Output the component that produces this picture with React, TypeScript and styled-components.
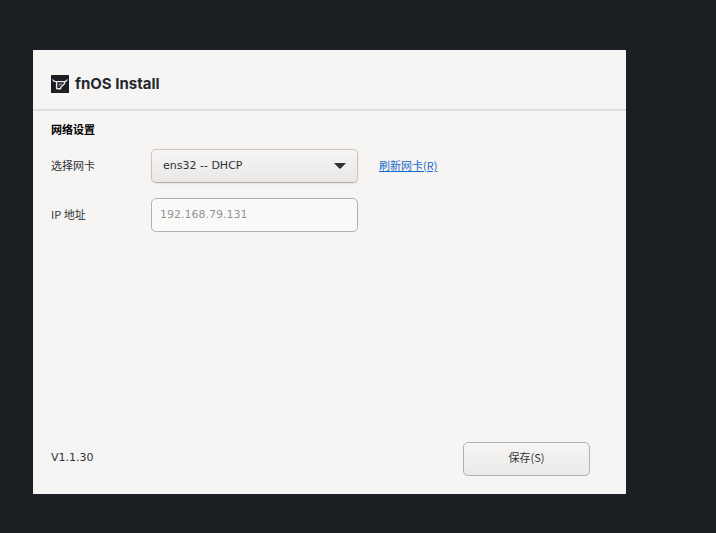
import React, { useState } from "react";
import styled, { createGlobalStyle } from "styled-components";

const GlobalStyle = createGlobalStyle`
  *, *::before, *::after { box-sizing: border-box; }
  html, body, #root { height: 100%; }
  body {
    margin: 0;
    background: #1b1e22;
    color: #2e3436;
    font: 11px/16px "DejaVu Sans", "Noto Sans CJK SC", sans-serif;
  }
  button, input, select { font: inherit; color: inherit; }
`;

const cjk = `"Noto Sans CJK SC", "DejaVu Sans", sans-serif`;

const Desktop = styled.div`
  display: flex;
  min-height: 100%;
  padding: 50px 90px 39px 33px;
`;

const Window = styled.main`
  flex: 1;
  display: flex;
  flex-direction: column;
  background: #f6f5f4;
`;

const Header = styled.header`
  display: flex;
  align-items: center;
  gap: 6px;
  padding: 24px 18px 15px;
  border-bottom: 2px solid #dfdedd;
`;

const Title = styled.h1`
  margin: 0;
  font: 700 15px/20px Inter, sans-serif;
  color: #25292d;
`;

const Form = styled.form`
  flex: 1;
  display: flex;
  flex-direction: column;
  padding: 10px 18px 18px;
`;

const SectionTitle = styled.h2`
  margin: 0 0 12px;
  font: 700 11px/16px ${cjk};
  color: #000;
`;

const Fields = styled.div`
  display: grid;
  grid-template-columns: 100px 207px auto;
  justify-content: start;
  align-items: center;
  row-gap: 15px;
`;

const Label = styled.label`
  padding-bottom: 2px;
  font-family: ${cjk};
`;

const SelectBox = styled.div`
  display: grid;
  align-items: center;

  & > * { grid-area: 1 / 1; }
  & > svg {
    justify-self: end;
    margin-right: 12px;
    pointer-events: none;
  }
`;

const Select = styled.select`
  appearance: none;
  width: 100%;
  height: 34px;
  padding: 0 32px 0 11px;
  border: 1px solid #cdc7c2;
  border-bottom-color: #b5b0ac;
  border-radius: 5px;
  background: linear-gradient(#f6f5f4, #e9e8e7);
  box-shadow: 0 1px 2px rgba(0, 0, 0, 0.08);
`;

const AddressInput = styled.input`
  width: 100%;
  height: 34px;
  padding: 0 8px 2px;
  border: 1px solid #b3b2b1;
  border-radius: 5px;
  background: #faf9f8;
  color: #929595;
`;

const RefreshLink = styled.a`
  margin-left: 21px;
  padding-bottom: 2px;
  font-family: ${cjk};
  color: #1b6acb;
  text-decoration: underline;
`;

const Footer = styled.footer`
  display: flex;
  align-items: center;
  justify-content: space-between;
  margin-top: auto;
  padding-right: 18px;
`;

const Version = styled.span`
  padding-bottom: 2px;
`;

const SaveButton = styled.button`
  width: 127px;
  height: 34px;
  padding: 0 0 4px;
  border: 1px solid #b3b2b1;
  border-radius: 5px;
  background: linear-gradient(#f6f5f4, #ebeae9);
  font-family: ${cjk};
`;

const Logo = () => (
  <svg width="18" height="18" viewBox="0 0 18 18" aria-hidden="true">
    <rect width="18" height="18" fill="#1b1e22" />
    <path
      d="M1.4 3.6C1.2 6 2.2 7.1 4.6 7.2L5.2 6C3.2 6 2.2 5.3 1.4 3.6ZM16.6 3.6C16.8 6 15.8 7.1 13.6 7.2L12.8 6C14.8 6 15.8 5.3 16.6 3.6Z"
      fill="#f2f2f2"
    />
    <path
      d="M5.6 6.6H13.6V8.4L9.6 12.4V13.8H6.4Q5.6 13.8 5.6 13Z"
      fill="none"
      stroke="#e8e8e8"
      strokeWidth="1.4"
      strokeLinejoin="round"
    />
    <path d="M8.2 11.2V9.2H11.2" fill="none" stroke="#a9abad" strokeWidth="1" />
  </svg>
);

const Arrow = () => (
  <svg width="12" height="6" viewBox="0 0 12 6" aria-hidden="true">
    <path d="M0 0H12L7 5.3Q6 6 5 5.3Z" fill="#2e3436" />
  </svg>
);

export default function App() {
  const [card, setCard] = useState("ens32");
  return (
    <>
      <GlobalStyle />
      <Desktop>
        <Window>
          <Header>
            <Logo />
            <Title>fnOS Install</Title>
          </Header>
          <Form onSubmit={(e) => e.preventDefault()}>
            <SectionTitle>网络设置</SectionTitle>
            <Fields>
              <Label htmlFor="card">选择网卡</Label>
              <SelectBox>
                <Select id="card" value={card} onChange={(e) => setCard(e.target.value)}>
                  <option value="ens32">ens32 -- DHCP</option>
                </Select>
                <Arrow />
              </SelectBox>
              <RefreshLink href="#refresh" accessKey="r">刷新网卡(R)</RefreshLink>
              <Label htmlFor="ip">IP 地址</Label>
              <AddressInput id="ip" value="192.168.79.131" readOnly />
            </Fields>
            <Footer>
              <Version>V1.1.30</Version>
              <SaveButton type="submit" accessKey="s">保存(S)</SaveButton>
            </Footer>
          </Form>
        </Window>
      </Desktop>
    </>
  );
}
